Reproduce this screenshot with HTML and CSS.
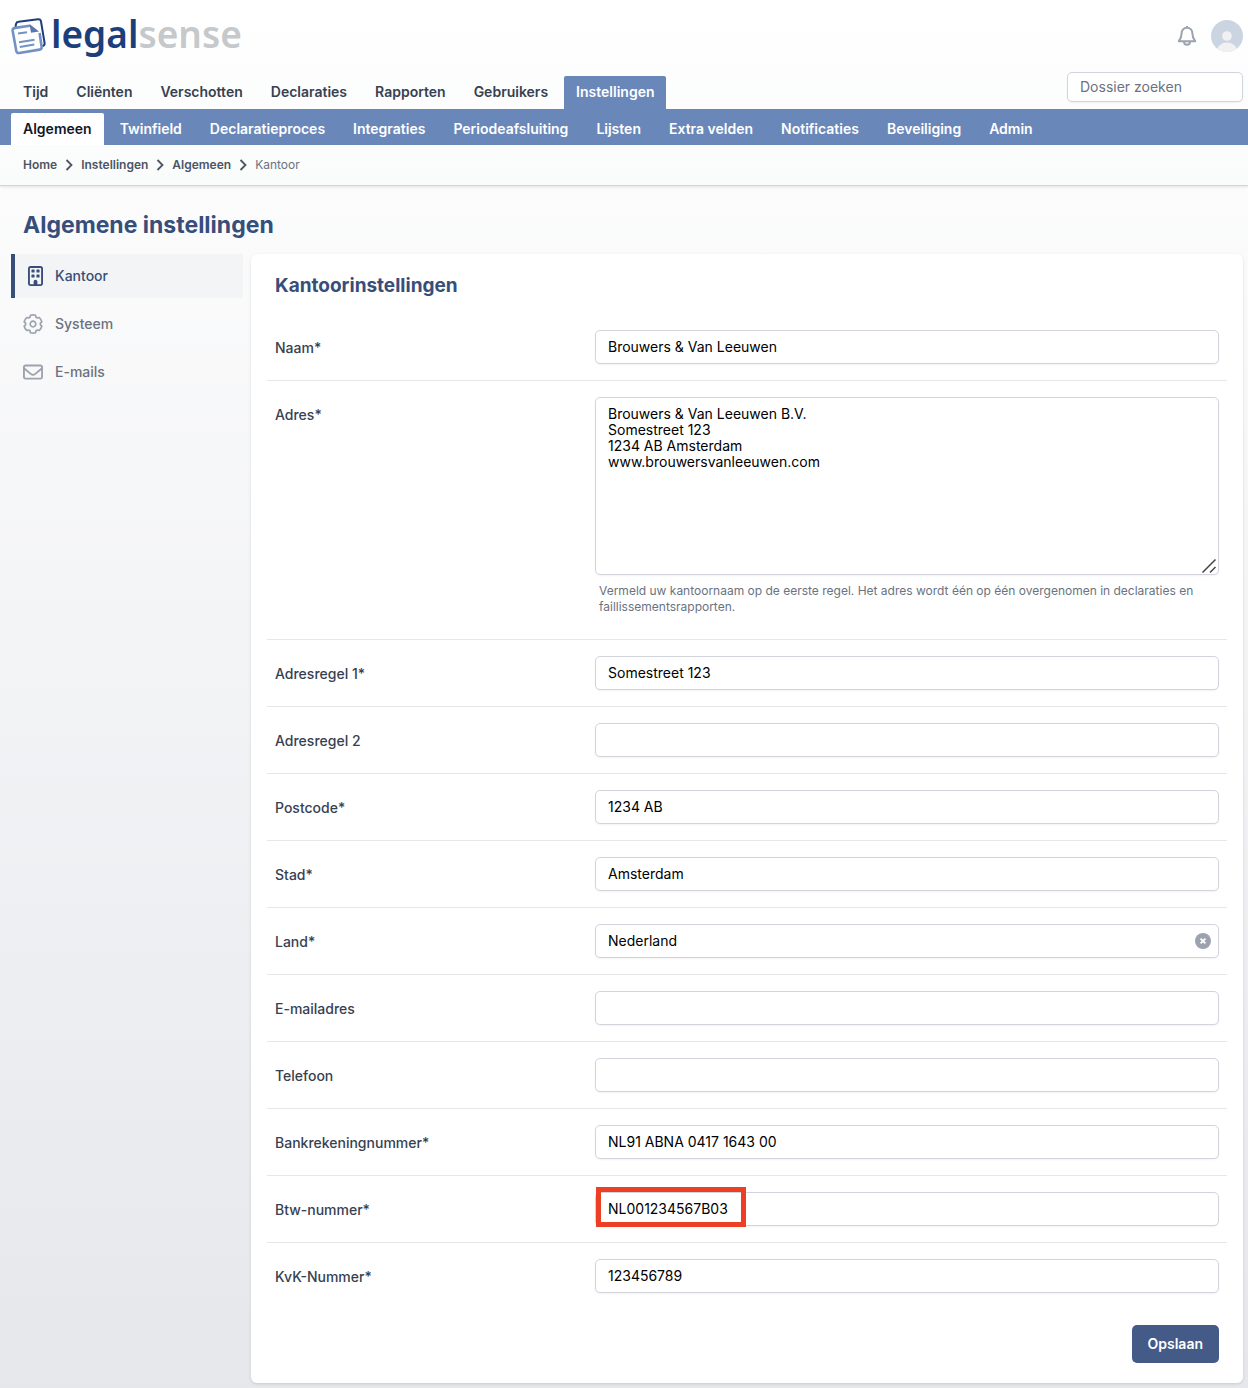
FILE: index.html
```html
<!DOCTYPE html>
<html lang="nl">
<head>
<meta charset="utf-8">
<meta name="viewport" content="width=device-width, initial-scale=1">
<title>Algemene instellingen</title>
<link rel="stylesheet" href="styles.css">
</head>
<body>
<header class="header">
  <div class="topbar">
    <a class="logo" href="#">
      <svg class="logo-mark" viewBox="0 -1 36 38" fill="none" aria-hidden="true">
        <path d="M4.500 9L5 6Q5.500 4 7.500 3.800L27 1.300Q29.500 1 30 3.500L33.600 25Q34 27.500 31.500 28" stroke="#1b3f7a" stroke-width="2"/>
        <path d="M19 7.700L4 9.900Q1.300 10.400 1.700 13L5.300 33Q5.800 35.400 8.300 35L28.500 31.600Q31 31.200 30.600 28.700L28.600 15" stroke="#7391c4" stroke-width="2.600"/>
        <path d="M7 15.600l9-1.400M8 24.300l15.500-2.500M8.800 29l14.500-2.400" stroke="#7391c4" stroke-width="2"/>
        <path d="M18.500 6l1.500 8.800 8-1.300z" fill="#5876b3"/>
      </svg>
      <span class="logo-text"><span class="logo-legal">legal</span><span class="logo-sense">sense</span></span>
    </a>
    <div class="account">
      <button class="icon-button" type="button" aria-label="Meldingen">
        <svg class="bell" viewBox="0 0 20 22" fill="none" stroke="#9ca3af" stroke-width="2" stroke-linecap="round" stroke-linejoin="round" aria-hidden="true"><path d="M10 1.800v1M10 2.800c-3.300 0-5.400 2.500-5.400 5.700 0 4-1 5.500-2.800 7.700h16.400c-1.800-2.200-2.800-3.700-2.800-7.700 0-3.200-2.100-5.700-5.400-5.700zM7 16.500c0 2 1.300 3.200 3 3.200s3-1.200 3-3.200"/></svg>
      </button>
      <button class="icon-button" type="button" aria-label="Account">
        <svg class="avatar" viewBox="0 0 32 32" aria-hidden="true"><defs><clipPath id="round"><circle cx="16" cy="16" r="16"/></clipPath></defs><g clip-path="url(#round)"><rect width="32" height="32" fill="#cbd5e1"/><circle cx="16" cy="16" r="4.800" fill="#f1f1f2"/><ellipse cx="16" cy="31" rx="10" ry="8.500" fill="#f1f1f2"/></g></svg>
      </button>
    </div>
  </div>
  <div class="navbar">
    <nav class="tabs" aria-label="Hoofdmenu">
      <a class="tab" href="#">Tijd</a>
      <a class="tab" href="#">Cliënten</a>
      <a class="tab" href="#">Verschotten</a>
      <a class="tab" href="#">Declaraties</a>
      <a class="tab" href="#">Rapporten</a>
      <a class="tab" href="#">Gebruikers</a>
      <a class="tab tab-current" href="#">Instellingen</a>
    </nav>
    <input class="search" type="search" placeholder="Dossier zoeken" aria-label="Dossier zoeken">
  </div>
  <nav class="subnav" aria-label="Instellingen">
    <a class="subtab subtab-current" href="#">Algemeen</a>
    <a class="subtab" href="#">Twinfield</a>
    <a class="subtab" href="#">Declaratieproces</a>
    <a class="subtab" href="#">Integraties</a>
    <a class="subtab" href="#">Periodeafsluiting</a>
    <a class="subtab" href="#">Lijsten</a>
    <a class="subtab" href="#">Extra velden</a>
    <a class="subtab" href="#">Notificaties</a>
    <a class="subtab" href="#">Beveiliging</a>
    <a class="subtab" href="#">Admin</a>
  </nav>
  <nav class="crumbs" aria-label="Kruimelpad">
    <a href="#">Home</a>
    <svg class="chevron" viewBox="0 0 8 12" aria-hidden="true"><path d="M1.500 1L6.500 6l-5 5"/></svg>
    <a href="#">Instellingen</a>
    <svg class="chevron" viewBox="0 0 8 12" aria-hidden="true"><path d="M1.500 1L6.500 6l-5 5"/></svg>
    <a href="#">Algemeen</a>
    <svg class="chevron" viewBox="0 0 8 12" aria-hidden="true"><path d="M1.500 1L6.500 6l-5 5"/></svg>
    <span class="crumb-current">Kantoor</span>
  </nav>
</header>

<main class="page">
  <h1 class="page-title">Algemene instellingen</h1>
  <div class="columns">
    <nav class="sidebar" aria-label="Algemene instellingen">
      <a class="side-link side-link-current" href="#">
        <svg class="side-icon" viewBox="-128 0 512 512" fill="currentColor" aria-hidden="true"><path d="M64 48c-8.800 0-16 7.200-16 16V448c0 8.800 7.200 16 16 16h80V400c0-26.500 21.500-48 48-48s48 21.500 48 48v64h80c8.800 0 16-7.200 16-16V64c0-8.800-7.200-16-16-16H64zM0 64C0 28.700 28.700 0 64 0H320c35.300 0 64 28.700 64 64V448c0 35.300-28.700 64-64 64H64c-35.300 0-64-28.700-64-64V64zm88 40c0-8.800 7.200-16 16-16h48c8.800 0 16 7.200 16 16v48c0 8.800-7.200 16-16 16H104c-8.800 0-16-7.200-16-16V104zM232 88h48c8.800 0 16 7.200 16 16v48c0 8.800-7.200 16-16 16H232c-8.800 0-16-7.200-16-16V104c0-8.800 7.200-16 16-16zM88 232c0-8.800 7.200-16 16-16h48c8.800 0 16 7.200 16 16v48c0 8.800-7.200 16-16 16H104c-8.800 0-16-7.200-16-16V232zm144-16h48c8.800 0 16 7.200 16 16v48c0 8.800-7.200 16-16 16H232c-8.800 0-16-7.200-16-16V232c0-8.800 7.200-16 16-16z"/></svg>
        Kantoor
      </a>
      <a class="side-link" href="#">
        <svg class="side-icon" viewBox="-10 -10 20 20" fill="none" stroke="currentColor" stroke-width="1.700" stroke-linejoin="round" aria-hidden="true"><circle r="2.800"/><path d="M-2.500-8.700Q0-9.400 2.500-8.700L3-6.800 4.400-6 6.300-6.500Q8.100-4.700 8.800-2.200L7.400-.8V.8L8.800 2.200Q8.100 4.700 6.300 6.500L4.400 6 3 6.800 2.500 8.700Q0 9.400-2.500 8.700L-3 6.800-4.400 6-6.300 6.500Q-8.100 4.700-8.800 2.200L-7.400.8V-.8L-8.800-2.200Q-8.100-4.700-6.300-6.500L-4.400-6-3-6.800z"/></svg>
        Systeem
      </a>
      <a class="side-link" href="#">
        <svg class="side-icon" viewBox="0 0 512 512" fill="currentColor" aria-hidden="true"><path d="M64 112c-8.800 0-16 7.200-16 16v22.100L220.500 291.700c20.700 17 50.400 17 71.100 0L464 150.100V128c0-8.800-7.200-16-16-16H64zM48 212.200V384c0 8.800 7.200 16 16 16H448c8.800 0 16-7.200 16-16V212.200L322 328.800c-38.400 31.500-93.700 31.500-132 0L48 212.200zM0 128C0 92.700 28.700 64 64 64H448c35.300 0 64 28.700 64 64V384c0 35.300-28.700 64-64 64H64c-35.300 0-64-28.700-64-64V128z"/></svg>
        E-mails
      </a>
    </nav>

    <form class="card">
      <h2 class="card-title">Kantoorinstellingen</h2>
      <div class="rows">
        <div class="row"><label class="label" for="naam">Naam*</label><div class="field"><input class="input" id="naam" type="text" value="Brouwers &amp; Van Leeuwen"></div></div>
        <div class="row">
          <label class="label" for="adres">Adres*</label>
          <div class="field">
            <div class="control">
              <textarea class="input textarea" id="adres" aria-describedby="adres-help">Brouwers &amp; Van Leeuwen B.V.
Somestreet 123
1234 AB Amsterdam
www.brouwersvanleeuwen.com</textarea>
              <svg class="grip" viewBox="0 0 16 16" aria-hidden="true"><path d="M1.500 14.500l13-13M9 14.500L14.500 9"/></svg>
            </div>
            <p class="help" id="adres-help">Vermeld uw kantoornaam op de eerste regel. Het adres wordt één op één overgenomen in declaraties en faillissementsrapporten.</p>
          </div>
        </div>
        <div class="row"><label class="label" for="regel1">Adresregel 1*</label><div class="field"><input class="input" id="regel1" type="text" value="Somestreet 123"></div></div>
        <div class="row"><label class="label" for="regel2">Adresregel 2</label><div class="field"><input class="input" id="regel2" type="text"></div></div>
        <div class="row"><label class="label" for="postcode">Postcode*</label><div class="field"><input class="input" id="postcode" type="text" value="1234 AB"></div></div>
        <div class="row"><label class="label" for="stad">Stad*</label><div class="field"><input class="input" id="stad" type="text" value="Amsterdam"></div></div>
        <div class="row"><label class="label" for="land">Land*</label><div class="field control"><input class="input" id="land" type="text" value="Nederland">
          <button class="clear" type="button" aria-label="Land wissen"><svg viewBox="0 0 16 16" aria-hidden="true"><circle cx="8" cy="8" r="8" fill="#9ca3af"/><path d="M5.600 5.600l4.800 4.800M10.400 5.600l-4.800 4.800" stroke="#fff" stroke-width="1.900"/></svg></button></div></div>
        <div class="row"><label class="label" for="email">E-mailadres</label><div class="field"><input class="input" id="email" type="email"></div></div>
        <div class="row"><label class="label" for="telefoon">Telefoon</label><div class="field"><input class="input" id="telefoon" type="tel"></div></div>
        <div class="row"><label class="label" for="bank">Bankrekeningnummer*</label><div class="field"><input class="input" id="bank" type="text" value="NL91 ABNA 0417 1643 00"></div></div>
        <div class="row"><label class="label" for="btw">Btw-nummer*</label><div class="field control"><input class="input" id="btw" type="text" value="NL001234567B03"><span class="highlight"></span></div></div>
        <div class="row"><label class="label" for="kvk">KvK-Nummer*</label><div class="field"><input class="input" id="kvk" type="text" value="123456789"></div></div>
      </div>
      <div class="actions"><button class="save" type="submit">Opslaan</button></div>
    </form>
  </div>
</main>
</body>
</html>
```
FILE: styles.css
```css
*, *::before, *::after { box-sizing: border-box; }

html { min-height: 100%; background: linear-gradient(#fff, #e5e7eb); }

body {
  margin: 0;
  font: 14px/20px Inter, "Liberation Sans", sans-serif;
  color: #374151;
}

h1, h2, p { margin: 0; }
a { color: inherit; text-decoration: none; }
svg { display: block; flex: none; }
button, input, textarea { font: inherit; }

/* Header */
.header {
  background: linear-gradient(#fff, #fafbfb);
  border-bottom: 1px solid #d1d5db;
  box-shadow: 0 1px 3px rgba(0, 0, 0, 0.1);
}

.topbar {
  display: flex;
  justify-content: space-between;
  align-items: center;
  height: 72px;
  padding: 0 5px 0 11px;
}

.logo { display: flex; gap: 4px; align-items: center; }
.logo-mark { width: 36px; height: 38px; }
.logo-text { padding-bottom: 4px; font: 700 37px/44px "Noto Sans", "Open Sans", sans-serif; }
.logo-legal { color: #1b3f7a; font-weight: 600; }
.logo-sense { color: #c5c9cb; font-weight: 600; }

.account { display: flex; align-items: center; gap: 14px; }
.icon-button { padding: 0; border: 0; background: none; }
.bell { width: 20px; height: 22px; }
.avatar { width: 32px; height: 32px; }

.navbar {
  display: flex;
  justify-content: space-between;
  align-items: flex-start;
  padding: 0 5px 0 11px;
}

.tabs { display: flex; gap: 4px; padding-top: 4px; }
.tab {
  padding: 6px 12px 7px;
  border-radius: 2px 2px 0 0;
  font-weight: 600;
}
.tab-current { background: #6987b9; color: #fff; }

.search {
  appearance: none;
  width: 176px;
  height: 30px;
  padding: 0 12px 2px;
  border: 1px solid #d1d5db;
  border-radius: 5px;
  background: #fff;
  color: #000;
  box-shadow: 0 1px 2px rgba(0, 0, 0, 0.05);
}
.search::placeholder { color: #6b7280; opacity: 1; }

.subnav {
  display: flex;
  gap: 4px;
  padding: 4px 11px 0;
  background: #6987b9;
  color: #fff;
}
.subtab {
  padding: 6px 12px;
  border-radius: 2px 2px 0 0;
  font-weight: 600;
}
.subtab-current { background: #fff; color: #111827; }

.crumbs {
  display: flex;
  align-items: center;
  gap: 8px;
  padding: 10px 23px;
  font-size: 12px;
  font-weight: 600;
  color: #4b5563;
}
.crumb-current { font-weight: 400; color: #6b7280; }
.chevron {
  width: 8px;
  height: 12px;
  fill: none;
  stroke: #4b5563;
  stroke-width: 1.8px;
}

/* Page */
.page { padding: 23px 5px 5px 11px; }
.page-title {
  padding: 0 12px;
  font-size: 23px;
  line-height: 32px;
  font-weight: 700;
  color: #374e7a;
}
.columns {
  display: grid;
  grid-template-columns: 232px minmax(0, 1fr);
  gap: 8px;
  align-items: start;
  padding-top: 13px;
}

.sidebar { display: flex; flex-direction: column; gap: 4px; }
.side-link {
  display: flex;
  align-items: center;
  gap: 12px;
  padding: 12px;
  font-weight: 500;
  color: #6b7280;
}
.side-icon { width: 20px; height: 20px; color: #9ca3af; }
.side-link-current {
  padding-left: 8px;
  border-left: 4px solid #374e7a;
  background: #f3f4f6;
  color: #374e7a;
}
.side-link-current .side-icon { color: inherit; }

.card {
  padding: 16px;
  border-radius: 6px;
  background: #fff;
  box-shadow: 0 1px 3px rgba(0, 0, 0, 0.12);
}
.card-title {
  padding: 0 8px;
  font-size: 19px;
  line-height: 32px;
  font-weight: 700;
  color: #374e7a;
}
.rows { padding-top: 12px; }
.row {
  display: grid;
  grid-template-columns: repeat(3, minmax(0, 1fr));
  gap: 16px;
  padding: 16px 8px;
}
.row + .row { border-top: 1px solid #e5e7eb; }
.label { padding-top: 8px; font-weight: 500; }
.field { grid-column: span 2; }
.control { position: relative; }

.input {
  display: block;
  width: 100%;
  height: 34px;
  padding: 7px 12px 9px;
  border: 1px solid #d1d5db;
  border-radius: 5px;
  background: #fff;
  color: #000;
  line-height: 16px;
  box-shadow: 0 1px 2px rgba(0, 0, 0, 0.05);
}
.textarea { height: 178px; padding: 8px 12px; resize: none; }
.grip {
  position: absolute;
  right: 2px;
  bottom: 1px;
  width: 16px;
  height: 16px;
  fill: none;
  stroke: #444;
  stroke-width: 1.5px;
  pointer-events: none;
}
.help {
  padding: 8px 4px;
  font-size: 12px;
  line-height: 16px;
  color: #6b7280;
}
.clear {
  position: absolute;
  top: 9px;
  right: 8px;
  width: 16px;
  height: 16px;
  padding: 0;
  border: 0;
  background: none;
}
.highlight {
  position: absolute;
  top: -5px;
  left: 1px;
  width: 150px;
  height: 40px;
  border: 5px solid #ec3f26;
  pointer-events: none;
}

.actions { display: flex; justify-content: flex-end; padding: 16px 8px 4px; }
.save {
  padding: 9px 16px;
  border: 0;
  border-radius: 5px;
  background: #445b87;
  color: #fff;
  font-weight: 600;
}
```
